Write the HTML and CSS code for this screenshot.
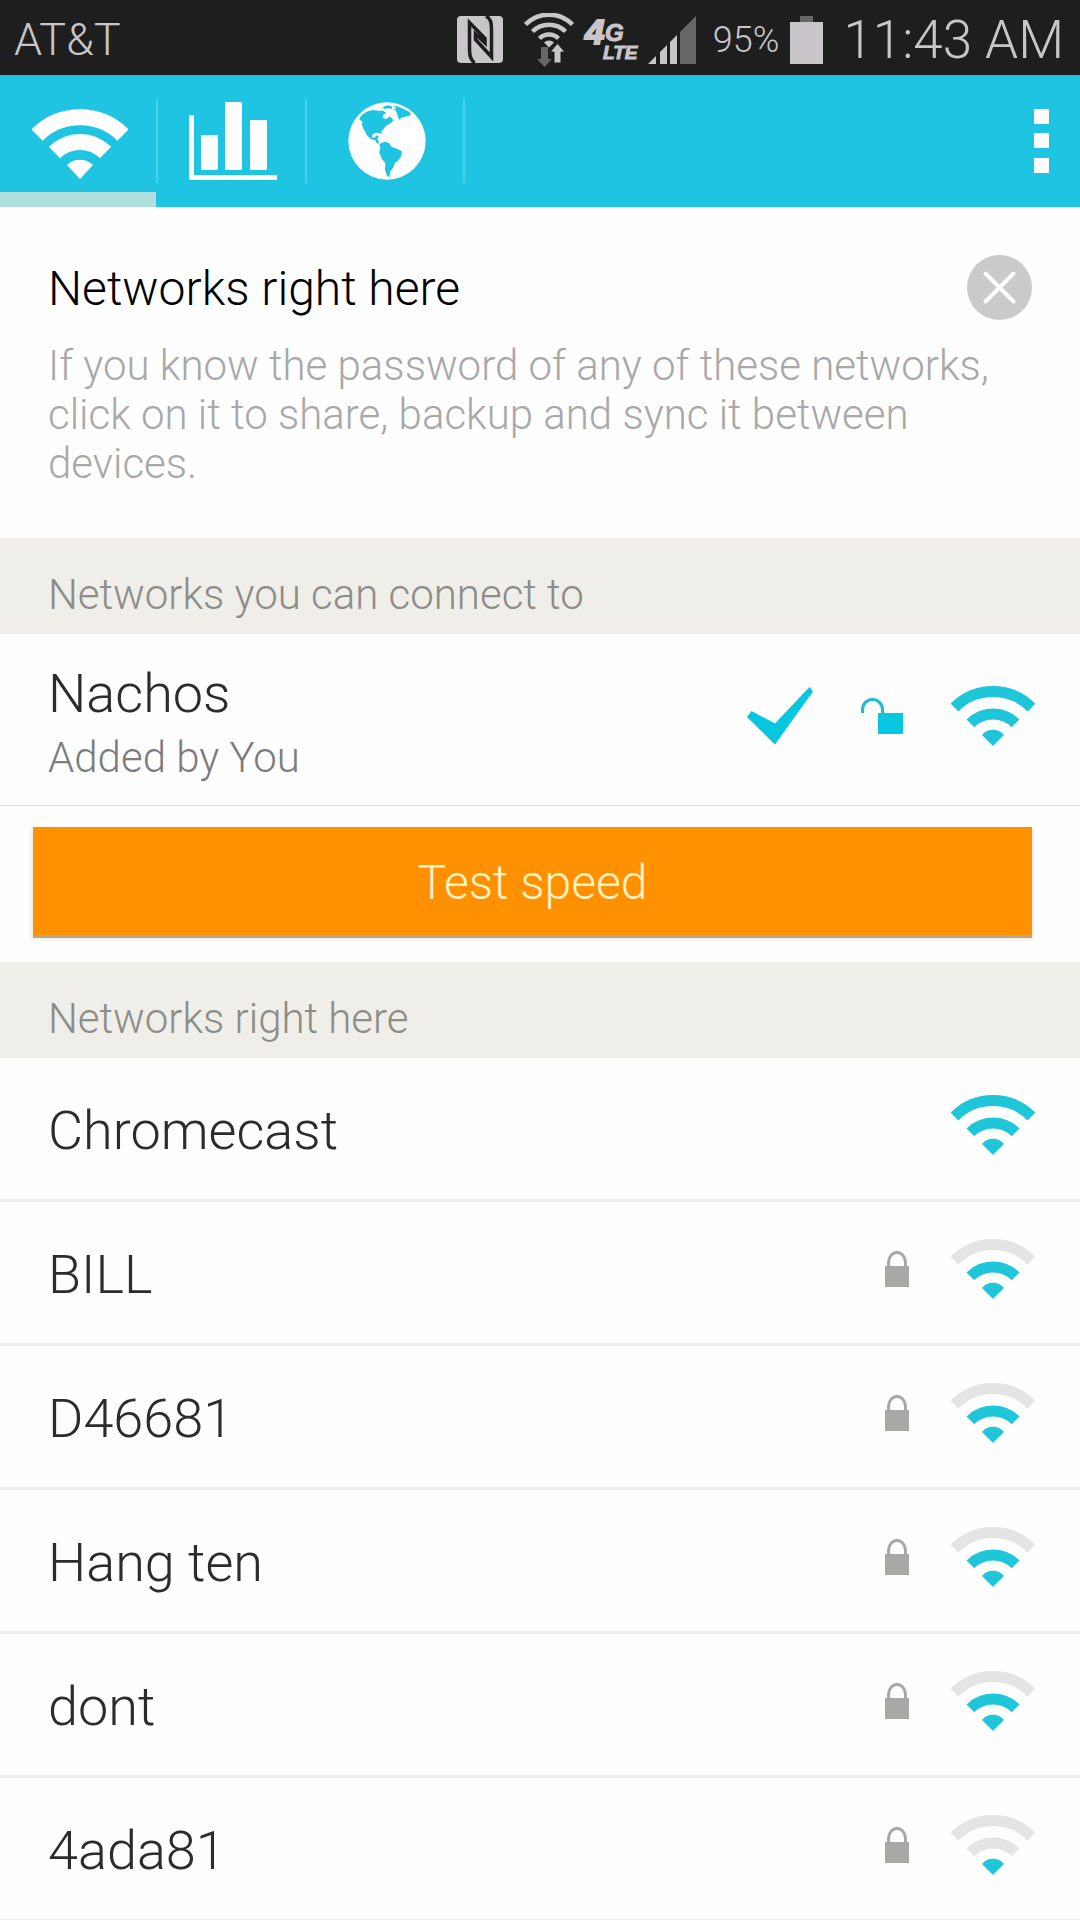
FILE: index.html
```html
<!DOCTYPE html>
<html lang="en">
<head>
<meta charset="utf-8">
<meta name="viewport" content="width=device-width, initial-scale=1">
<title>Networks</title>
<link rel="stylesheet" href="styles.css">
</head>
<body>
<svg class="defs" width="0" height="0" aria-hidden="true">
  <symbol id="signal" viewBox="0 0 84 60">
    <path class="arc arc-outer" d="M3.5 21.5A54.5 54.5 0 0 1 80.5 21.5"/>
    <path class="arc arc-middle" d="M19.4 37.4A32 32 0 0 1 64.6 37.4"/>
    <path class="dot" d="M42 60L31 49A14 14 0 0 1 53 49Z"/>
  </symbol>
  <symbol id="lock" viewBox="0 0 24 36">
    <path d="M3.5 16V11.5A8.5 10 0 0 1 20.5 11.5V16" fill="none" stroke="#a8a8a4" stroke-width="3"/>
    <path d="M0 15H24V36H0Z" fill="#a8a8a4"/>
  </symbol>
</svg>

<div class="status-bar">
  <span class="carrier">AT&amp;T</span>
  <div class="status-icons">
    <svg class="nfc" width="46" height="47" viewBox="0 0 46 47" role="img" aria-label="NFC">
      <rect width="46" height="47" rx="4" fill="#c8c6c8"/>
      <path d="M17.500 47C13 43 12.500 39 12.500 31V6.500L28 22.500V27L18.500 18V23.500L34.500 41V15C34.500 7 34 3 29 0" fill="none" stroke="#1e1e1e" stroke-width="3.500"/>
    </svg>
    <svg width="50" height="54" viewBox="0 0 50 54" role="img" aria-label="Wi-Fi">
      <g fill="none" stroke="#c8c6c8" stroke-width="4.500">
        <path d="M1.500 11.500A33 33 0 0 1 48.500 11.500"/>
        <path d="M8.500 18.500A23.500 23.500 0 0 1 41.500 18.500"/>
        <path d="M15.500 25.500A13.500 13.500 0 0 1 34.500 25.500"/>
      </g>
      <path d="M25 34.500L20 29.500A7 7 0 0 1 30 29.500Z" fill="#c8c6c8"/>
      <path d="M17 34H24V46H28L20.500 54L13 46H17Z" fill="#666"/>
      <path d="M30 50V39H26L33.500 30.500L41 39H37V50Z" fill="#c8c6c8" stroke="#1e1e1e" stroke-width="1"/>
    </svg>
    <svg class="cell" width="52" height="44" viewBox="0 0 52 44" role="img" aria-label="4G LTE">
      <g font-family="Liberation Sans, Arial, sans-serif" font-weight="bold" font-style="italic" fill="#c8c6c8" stroke="#c8c6c8">
        <text x="0" y="26" font-size="35" stroke-width="2">4</text>
        <text x="20" y="23" font-size="24" stroke-width="1">G</text>
        <text x="18" y="41" font-size="19" stroke-width="1">LTE</text>
      </g>
    </svg>
    <svg width="48" height="48" viewBox="0 0 48 48" role="img" aria-label="Signal strength">
      <path d="M0 48L8 40V48ZM12 36L19 29V48H12ZM22 26L29 19V48H22Z" fill="#c8c6c8"/>
      <path d="M32 16L48 0V48H32Z" fill="#666"/>
    </svg>
    <span class="battery-level">95%</span>
    <svg width="33" height="48" viewBox="0 0 33 48" role="img" aria-label="Battery">
      <path d="M10 0H23V6H10Z" fill="#666"/>
      <path d="M0 6H33V48H0Z" fill="#c8c6c8"/>
    </svg>
    <span class="clock">11:43 AM</span>
  </div>
</div>

<header class="toolbar">
  <nav class="tabs" aria-label="Sections">
    <a class="tab tab-active" href="#networks" aria-label="Networks" aria-current="page">
      <svg width="96" height="78" viewBox="0 -7 96 78">
        <g fill="none" stroke="#fff" stroke-width="16">
          <path d="M5 26A61 61 0 0 1 91 26"/>
          <path d="M22.500 43.500A36 36 0 0 1 73.500 43.500"/>
        </g>
        <path d="M48 70L35 56A18.500 18.500 0 0 1 61 56Z" fill="#fff"/>
      </svg>
    </a>
    <span class="divider"></span>
    <a class="tab" href="#stats" aria-label="Statistics">
      <svg width="88" height="78" viewBox="0 0 88 78">
        <path d="M0 13H5V73H88V78H0ZM12 33H29V68H12ZM36 0H53V68H36ZM61 18H78V68H61Z" fill="#fff"/>
      </svg>
    </a>
    <span class="divider"></span>
    <a class="tab tab-wide" href="#map" aria-label="Map">
      <svg width="78" height="78" viewBox="33 31 234 234">
        <circle cx="150" cy="148" r="116" fill="#fff"/>
        <path d="M66 82L75 69L92 59L108 55L124 57L138 57L148 64L139 69L137 79L149 82L157 74L164 79L169 86L162 94L149 101L139 113L132 121L135 127L127 125L117 123L107 128L105 138L114 137L119 131L125 134L121 142L126 150L124 156L118 153L115 146L102 143L90 131L80 112L75 101L76 90L70 85Z" fill="#1fc4e3"/>
        <path d="M137 46L151 41L164 43L165 52L152 50L142 52ZM166 56L175 55L180 66L186 84L196 77L212 74L222 70L218 61L199 51L181 44L169 43L178 50Z" fill="#1fc4e3"/>
        <path d="M132 154L145 150L157 155L164 166L180 171L195 179L193 193L183 207L174 213L168 228L160 240L157 256L151 254L144 235L145 214L135 203L127 183L130 168L127 158Z" fill="#1fc4e3"/>
      </svg>
    </a>
    <span class="divider"></span>
  </nav>
  <button class="menu-button" type="button" aria-label="More options">
    <svg width="15" height="64" viewBox="0 0 15 64"><path d="M0 0H15V15H0ZM0 24H15V39H0ZM0 49H15V64H0Z" fill="#fff"/></svg>
  </button>
</header>

<main class="content" id="networks">
  <section class="intro">
    <div class="intro-head">
      <h1 class="intro-title">Networks right here</h1>
      <button class="close-button" type="button" aria-label="Dismiss">
        <svg width="65" height="65" viewBox="0 0 65 65">
          <circle cx="32.500" cy="32.500" r="32.500" fill="#cacaca"/>
          <path d="M18.500 18.500L46.500 46.500M46.500 18.500L18.500 46.500" stroke="#fff" stroke-width="4" stroke-linecap="round"/>
        </svg>
      </button>
    </div>
    <p class="intro-text">If you know the password of any of these networks, click on it to share, backup and sync it between devices.</p>
  </section>

  <h2 class="section-title">Networks you can connect to</h2>
  <div class="network network-current">
    <div class="network-info">
      <span class="network-name">Nachos</span>
      <span class="network-note">Added by You</span>
    </div>
    <div class="network-icons">
      <svg width="72" height="58" viewBox="0 0 72 58" role="img" aria-label="Connected"><path d="M0 30L4.500 24L28 36.500L62.500 0L66 4.500L28 57.500Z" fill="#06c6e0"/></svg>
      <svg width="48" height="36" viewBox="0 0 48 36" role="img" aria-label="Unlocked">
        <path d="M1.500 15V11.500A10 10 0 0 1 21.500 11.500V15" fill="none" stroke="#1bbdd6" stroke-width="3"/>
        <path d="M17 15H42V36H17Z" fill="#06c6e0"/>
      </svg>
      <svg class="level-3" width="84" height="60" role="img" aria-label="Strong signal"><use href="#signal"/></svg>
    </div>
  </div>
  <div class="action">
    <button class="speed-button" type="button">Test speed</button>
  </div>

  <h2 class="section-title">Networks right here</h2>
  <ul class="network-list">
    <li class="network">
      <span class="network-name">Chromecast</span>
      <div class="network-icons">
        <svg class="level-3" width="84" height="60" role="img" aria-label="Strong signal"><use href="#signal"/></svg>
      </div>
    </li>
    <li class="network">
      <span class="network-name">BILL</span>
      <div class="network-icons">
        <svg width="24" height="36" role="img" aria-label="Locked"><use href="#lock"/></svg>
        <svg class="level-2" width="84" height="60" role="img" aria-label="Medium signal"><use href="#signal"/></svg>
      </div>
    </li>
    <li class="network">
      <span class="network-name">D46681</span>
      <div class="network-icons">
        <svg width="24" height="36" role="img" aria-label="Locked"><use href="#lock"/></svg>
        <svg class="level-2" width="84" height="60" role="img" aria-label="Medium signal"><use href="#signal"/></svg>
      </div>
    </li>
    <li class="network">
      <span class="network-name">Hang ten</span>
      <div class="network-icons">
        <svg width="24" height="36" role="img" aria-label="Locked"><use href="#lock"/></svg>
        <svg class="level-2" width="84" height="60" role="img" aria-label="Medium signal"><use href="#signal"/></svg>
      </div>
    </li>
    <li class="network">
      <span class="network-name">dont</span>
      <div class="network-icons">
        <svg width="24" height="36" role="img" aria-label="Locked"><use href="#lock"/></svg>
        <svg class="level-2" width="84" height="60" role="img" aria-label="Medium signal"><use href="#signal"/></svg>
      </div>
    </li>
    <li class="network">
      <span class="network-name">4ada81</span>
      <div class="network-icons">
        <svg width="24" height="36" role="img" aria-label="Locked"><use href="#lock"/></svg>
        <svg class="level-1" width="84" height="60" role="img" aria-label="Weak signal"><use href="#signal"/></svg>
      </div>
    </li>
  </ul>
</main>
</body>
</html>
```

FILE: styles.css
```css
* {
  box-sizing: border-box;
}

body {
  display: flex;
  flex-direction: column;
  height: 100vh;
  margin: 0;
  overflow: hidden;
  background: #fefefe;
  color: #2c2c2c;
  font-family: Roboto, sans-serif;
  font-weight: 300;
}

svg {
  display: block;
  flex: none;
}

button {
  padding: 0;
  border: 0;
  background: none;
  font: inherit;
  cursor: pointer;
}

.defs {
  position: absolute;
}

/* Status bar */
.status-bar {
  display: flex;
  flex: none;
  align-items: center;
  justify-content: space-between;
  height: 75px;
  padding: 4px 16px 0 14px;
  background: #1e1e1e;
  color: #c8c6c8;
}

.carrier {
  font-size: 45px;
}

.status-icons {
  display: flex;
  align-items: center;
  gap: 11px;
}

.nfc {
  margin-right: 10px;
}

.cell {
  overflow: visible;
}

.battery-level {
  margin-left: 6px;
  font-size: 36px;
}

.clock {
  margin-left: 9px;
  font-size: 53px;
}

/* Toolbar */
.toolbar {
  display: flex;
  flex: none;
  align-items: stretch;
  justify-content: space-between;
  height: 132px;
  background: #1fc4e3;
}

.tabs {
  display: flex;
  align-items: center;
}

.tab {
  display: flex;
  align-items: center;
  justify-content: center;
  width: 147px;
  height: 100%;
  padding-left: 3px;
}

.tab-wide {
  width: 156px;
}

.tab-active {
  position: relative;
  width: 156px;
}

.tab-active::after {
  content: "";
  position: absolute;
  right: 0;
  bottom: 0;
  left: 0;
  height: 15px;
  background: #b0dfe0;
}

.divider {
  width: 2px;
  height: 84px;
  background: #48d2ec;
}

.menu-button {
  display: flex;
  align-items: center;
  justify-content: flex-end;
  width: 96px;
  padding-right: 31px;
}

/* Content */
.content {
  flex: 1;
  min-height: 0;
  overflow-y: auto;
  scrollbar-width: none;
}

.intro {
  padding: 48px 48px 50px;
}

.intro-head {
  display: flex;
  align-items: flex-start;
  justify-content: space-between;
}

.intro-title {
  margin: 0;
  color: #000;
  font-size: 48px;
  font-weight: 300;
  line-height: 68px;
}

.intro-text {
  margin: 18px 0 0;
  color: #a8a8a8;
  font-size: 42px;
  line-height: 49px;
}

.section-title {
  height: 96px;
  margin: 0;
  padding: 18px 48px 0;
  background: #f0eee9;
  color: #8c8c88;
  font-size: 42px;
  font-weight: 300;
  line-height: 78px;
}

.network {
  display: flex;
  align-items: center;
  justify-content: space-between;
  height: 144px;
  padding: 0 45px 0 48px;
  border-bottom: 3px solid #eee;
}

.network-current {
  height: 172px;
  border-bottom: 1px solid #dcdcdc;
}

.network-list {
  margin: 0;
  padding: 0;
  list-style: none;
}

.network-info {
  display: flex;
  flex-direction: column;
  padding-top: 8px;
}

.network-name {
  padding-top: 4px;
  font-size: 54px;
  line-height: 64px;
}

.network-note {
  color: #7c7c7c;
  font-size: 42px;
  line-height: 64px;
}

.network-icons {
  display: flex;
  align-items: center;
  gap: 42px;
  padding-bottom: 8px;
}

/* Signal strength */
.arc {
  fill: none;
  stroke-width: 11;
}

.arc-outer {
  stroke: var(--outer);
}

.arc-middle {
  stroke: var(--middle);
}

.dot {
  fill: #1fc6da;
}

.level-3 {
  --outer: #1fc6da;
  --middle: #1fc6da;
}

.level-2 {
  --outer: #e4e4e4;
  --middle: #1fc6da;
}

.level-1 {
  --outer: #e4e4e4;
  --middle: #e4e4e4;
}

.action {
  padding: 21px 48px 27px 33px;
}

.speed-button {
  display: block;
  width: 100%;
  height: 108px;
  padding-top: 2px;
  background: #ff9100;
  box-shadow: 0 3px 0 #b9a78c, 0 3px 3px 2px #eeece6;
  color: #fff3c4;
  font-size: 48px;
}
```
